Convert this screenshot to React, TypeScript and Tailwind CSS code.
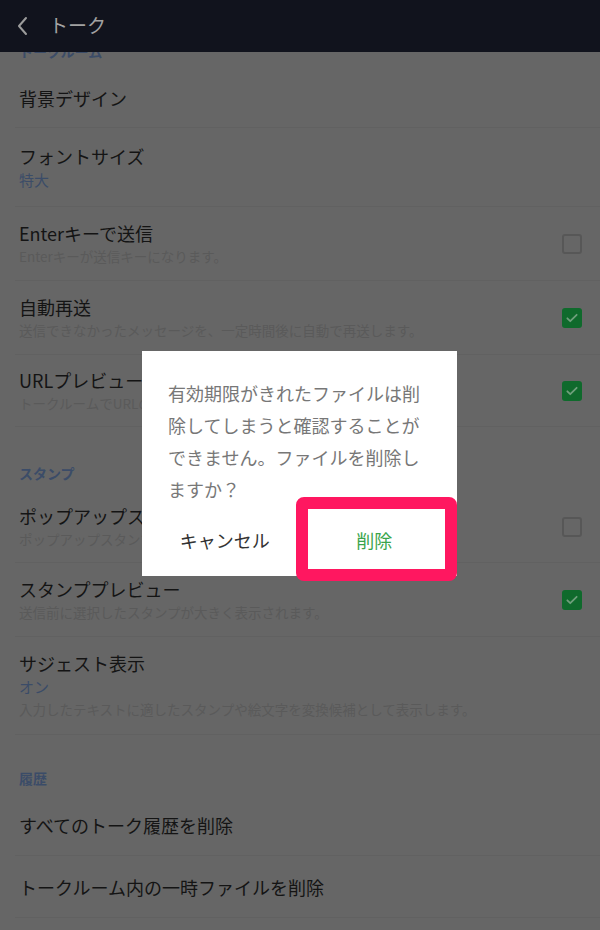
const rowBase = "ml-[15px] pl-[4px] pr-[18px] border-b border-[#616161] flex items-center justify-between";

function Checkbox({ checked }: { checked: boolean }) {
  if (!checked) {
    return <div className="w-[20px] h-[20px] rounded-[3px] border-2 border-[#575757] shrink-0" />;
  }
  return (
    <div className="w-[20px] h-[20px] rounded-[3px] bg-[#0f6a2c] flex items-center justify-center shrink-0">
      <svg width="14" height="14" viewBox="0 0 24 24" fill="none" stroke="#6f9f7c" strokeWidth={3} strokeLinecap="round" strokeLinejoin="round">
        <path d="M4 12.5l5 5L20 6.5" />
      </svg>
    </div>
  );
}

function SectionLabel({ label, h, pt }: { label: string; h: string; pt: string }) {
  return (
    <div className={`${h} ${pt} pl-[19px]`}>
      <div className="text-[14px] leading-[20px] font-bold text-[#3b4c68]">{label}</div>
    </div>
  );
}

function Row({
  title,
  value,
  sub,
  check,
  h,
}: {
  title: string;
  value?: string;
  sub?: string;
  check?: boolean;
  h: string;
}) {
  return (
    <div className={`${rowBase} ${h}`}>
      <div className="flex flex-col whitespace-nowrap">
        <div className="text-[18px] leading-[24px] text-[#141414]">{title}</div>
        {value && <div className="text-[15px] leading-[23px] text-[#3b4c68]">{value}</div>}
        {sub && <div className="text-[13.5px] leading-[22px] text-[#5a5a5a]">{sub}</div>}
      </div>
      {check !== undefined && <Checkbox checked={check} />}
    </div>
  );
}

export default function App() {
  return (
    <div className="relative w-[600px] h-[930px] overflow-hidden bg-[#666666] font-['Noto_Sans_CJK_JP','Noto_Sans',sans-serif]">
      {/* Action bar */}
      <header className="relative z-10 h-[52px] bg-[#11131d] flex items-center pl-[15px]">
        <svg width="16" height="20" viewBox="0 0 16 20" fill="none" stroke="#9c9c9c" strokeWidth={2} strokeLinecap="round" strokeLinejoin="round">
          <path d="M11 2L4 10l7 8" />
        </svg>
        <span className="ml-[18px] text-[19px] leading-none text-[#a2a2a2] -mt-[4px]">トーク</span>
      </header>

      {/* Settings list (scrolled) */}
      <div className="-mt-[30px]">
        <SectionLabel label="トークルーム" h="h-[46px]" pt="pt-[19px]" />
        <Row title="背景デザイン" h="h-[60px]" />
        <Row title="フォントサイズ" value="特大" h="h-[79px]" />
        <Row title="Enterキーで送信" sub="Enterキーが送信キーになります。" check={false} h="h-[74px]" />
        <Row title="自動再送" sub="送信できなかったメッセージを、一定時間後に自動で再送します。" check={true} h="h-[74px]" />
        <Row title="URLプレビュー" sub="トークルームでURLのプレビューを表示します。" check={true} h="h-[72px]" />
        <SectionLabel label="スタンプ" h="h-[65px]" pt="pt-[36px]" />
        <Row title="ポップアップスタンプ" sub="ポップアップスタンプを自動で再生します。" check={false} h="h-[71px]" />
        <Row title="スタンププレビュー" sub="送信前に選択したスタンプが大きく表示されます。" check={true} h="h-[74px]" />
        <Row
          title="サジェスト表示"
          value="オン"
          sub="入力したテキストに適したスタンプや絵文字を変換候補として表示します。"
          h="h-[98px]"
        />
        <SectionLabel label="履歴" h="h-[59px]" pt="pt-[33px]" />
        <Row title="すべてのトーク履歴を削除" h="h-[62px]" />
        <Row title="トークルーム内の一時ファイルを削除" h="h-[62px]" />
      </div>

      {/* Dialog */}
      <div className="absolute left-[142px] top-[351px] w-[315px] h-[225px] bg-white">
        <p className="pt-[26px] pl-[26px] text-[18px] leading-[32px] text-[#777777] whitespace-nowrap">
          有効期限がきれたファイルは削
          <br />
          除してしまうと確認することが
          <br />
          できません。ファイルを削除し
          <br />
          ますか？
        </p>
        <div className="mt-[7px] px-[14px] flex gap-[12px]">
          <button className="w-[138px] h-[56px] text-[18px] text-[#333333]">キャンセル</button>
          <button className="w-[138px] h-[56px] text-[18px] text-[#3aa54c]">削除</button>
        </div>

        {/* highlight annotation */}
        <div className="absolute left-[154px] top-[146px] w-[161px] h-[84px] border-[12px] border-[#ff1760] rounded-[8px] pointer-events-none" />
      </div>
    </div>
  );
}
